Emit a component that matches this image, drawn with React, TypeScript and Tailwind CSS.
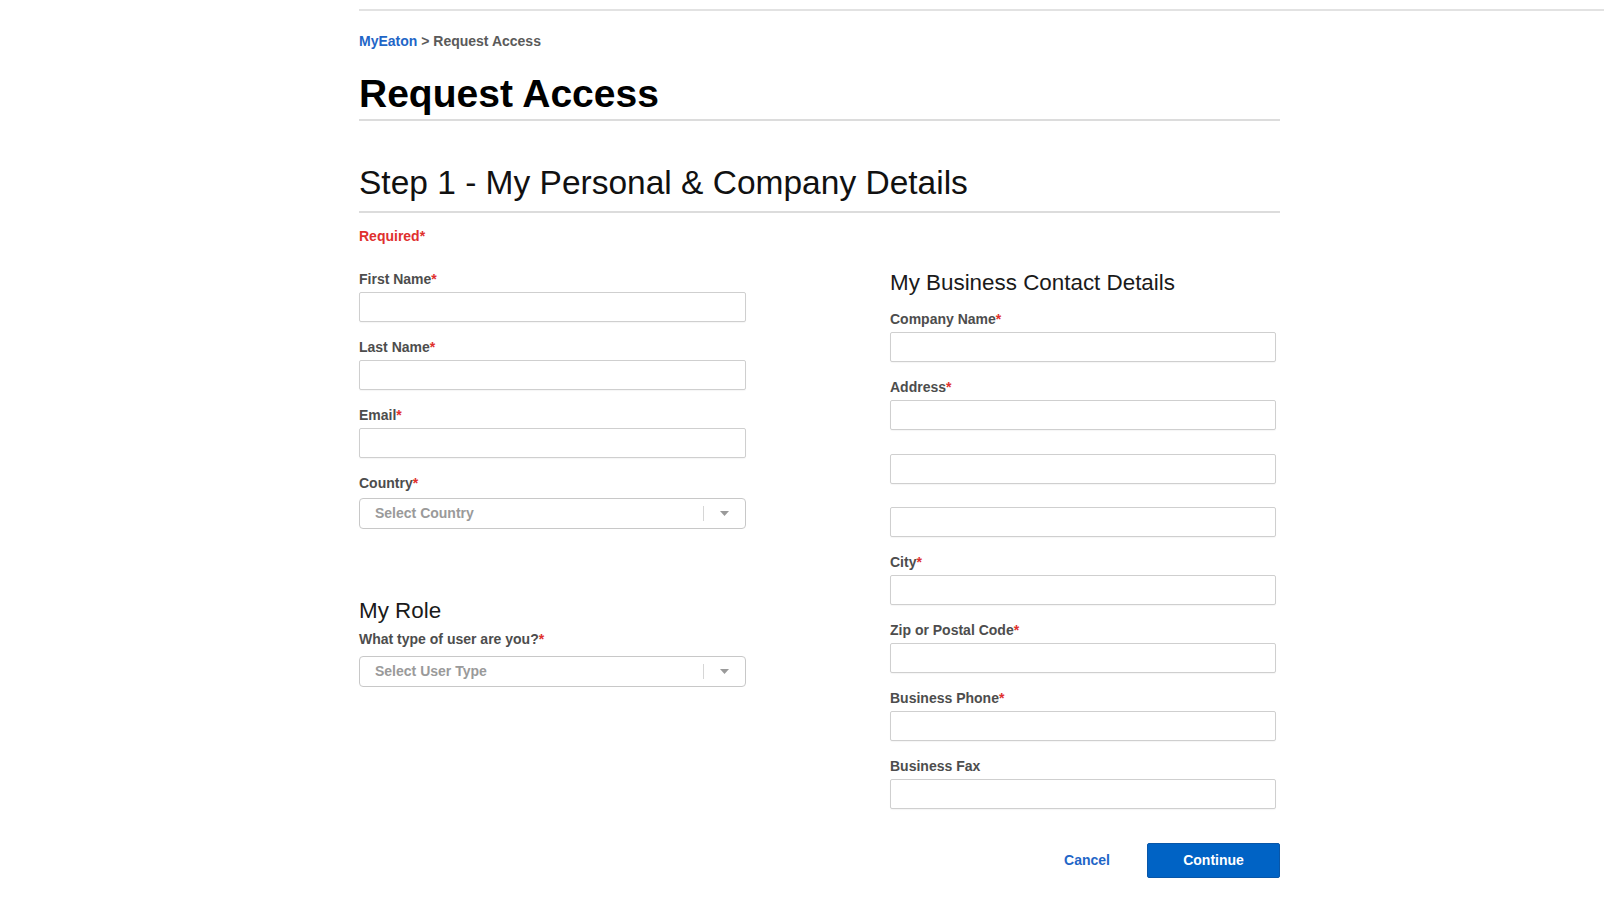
import React from "react";

const font = { fontFamily: '"Liberation Sans", Arial, sans-serif' };

function Label({ text, required = true }: { text: string; required?: boolean }) {
  return (
    <div className="h-4 text-[14px] leading-4 font-bold text-[#4d4d4d]">
      {text}
      {required && <span className="text-[#e0302e]">*</span>}
    </div>
  );
}

function TextInput() {
  return (
    <input
      type="text"
      className="block h-[30px] w-full rounded-[2px] border border-[#cfcfcf] bg-white px-3 text-[14px] outline-none shadow-[0_1px_1px_rgba(0,0,0,0.04)]"
    />
  );
}

function Field({ label, required = true }: { label: string; required?: boolean }) {
  return (
    <div className="flex flex-col">
      <Label text={label} required={required} />
      <div className="mt-[5px]">
        <TextInput />
      </div>
    </div>
  );
}

function SelectBox({ placeholder }: { placeholder: string }) {
  return (
    <div className="flex h-[31px] w-full items-center rounded-[4px] border border-[#c8c8c8] bg-white">
      <span className="flex-1 pl-[15px] text-[14px] font-bold text-[#9a9a9a]">{placeholder}</span>
      <span className="h-[15px] w-px bg-[#d6d6d6]" />
      <span className="flex w-[41px] items-center justify-center">
        <svg width="9" height="5" viewBox="0 0 9 5">
          <path d="M0 0 L9 0 L4.5 5 Z" fill="#9a9a9a" />
        </svg>
      </span>
    </div>
  );
}

export default function App() {
  return (
    <div className="min-h-[899px] w-full bg-white" style={font}>
      <div className="ml-[359px] pt-[9px]">
        <div className="h-[2px] bg-[#e2e2e2]" />
      </div>
      <div className="ml-[359px] w-[921px]">
        <div className="mt-[22px] h-4 text-[14px] leading-4 font-bold">
          <span className="text-[#1f66c7]">MyEaton</span>
          <span className="text-[#5a5a5a]"> &gt; Request Access</span>
        </div>
        <h1 className="mt-[23px] text-[39px] leading-[44px] font-bold text-black">Request Access</h1>
        <div className="mt-[3px] h-[2px] bg-[#dcdcdc]" />
        <h2 className="mt-[42px] text-[33.5px] leading-[40px] text-[#111]">
          Step 1 - My Personal &amp; Company Details
        </h2>
        <div className="mt-[8px] h-[2px] bg-[#dcdcdc]" />
        <div className="mt-[15px] h-4 text-[14px] leading-4 font-bold text-[#e0302e]">Required*</div>

        <div className="mt-[27px] flex">
          <div className="w-[531px]">
            <div className="flex w-[387px] flex-col gap-[17px]">
              <Field label="First Name" />
              <Field label="Last Name" />
              <Field label="Email" />
              <div className="flex flex-col">
                <Label text="Country" />
                <div className="mt-[7px]">
                  <SelectBox placeholder="Select Country" />
                </div>
              </div>
            </div>
            <div className="mt-[69px] w-[387px]">
              <h3 className="text-[22.4px] leading-[26px] text-[#1a1a1a]">My Role</h3>
              <div className="mt-[7px]">
                <Label text="What type of user are you?" />
              </div>
              <div className="mt-[9px]">
                <SelectBox placeholder="Select User Type" />
              </div>
            </div>
          </div>

          <div className="-mt-px w-[386px]">
            <h3 className="text-[22.4px] leading-[26px] text-[#1a1a1a]">My Business Contact Details</h3>
            <div className="mt-[15px] flex flex-col gap-[17px]">
              <Field label="Company Name" />
              <div className="flex flex-col">
                <Label text="Address" />
                <div className="mt-[5px] flex flex-col gap-[23.5px]">
                  <TextInput />
                  <TextInput />
                  <TextInput />
                </div>
              </div>
              <Field label="City" />
              <Field label="Zip or Postal Code" />
              <Field label="Business Phone" />
              <Field label="Business Fax" required={false} />
            </div>
          </div>
        </div>

        <div className="mt-[34px] flex items-center justify-end gap-[37px]">
          <button className="text-[14px] font-bold text-[#1f66c7]">Cancel</button>
          <button className="h-[35px] w-[133px] rounded-[2px] border border-[#0856a8] bg-[#0063c5] text-[14px] font-bold text-white">
            Continue
          </button>
        </div>
      </div>
    </div>
  );
}
